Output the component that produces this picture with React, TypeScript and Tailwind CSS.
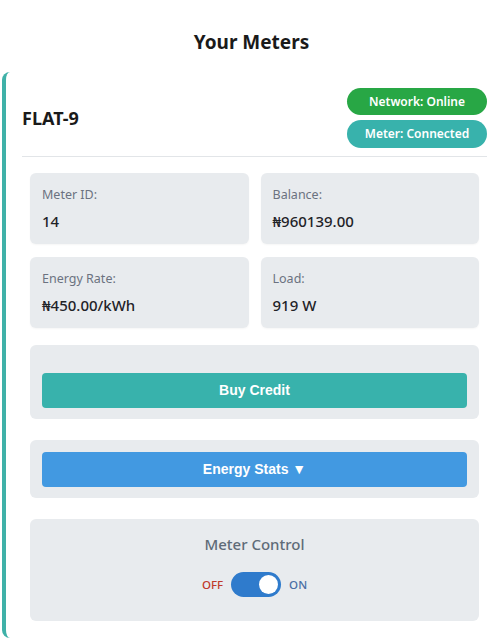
import { useState } from "react";

const stats = [
  { label: "Meter ID:", value: "14" },
  { label: "Balance:", value: "₦960139.00" },
  { label: "Energy Rate:", value: "₦450.00/kWh" },
  { label: "Load:", value: "919 W" },
];

function StatBox({ label, value }: { label: string; value: string }) {
  return (
    <div className="h-[71px] rounded-md bg-[#e8ebee] px-3 pt-[13px] shadow-[0_1px_2px_rgba(0,0,0,0.04)]">
      <p className="text-[12.5px] leading-[18px] text-[#6b7280]">{label}</p>
      <p className="mt-[7px] text-[15px] leading-[20px] font-medium text-[#1f2328]">
        {value}
      </p>
    </div>
  );
}

function MeterToggle() {
  const [on, setOn] = useState(true);
  return (
    <div className="mt-[17px] flex items-center justify-center gap-[8px]">
      <span className="text-[11.5px] font-medium text-[#c0392b]">OFF</span>
      <button
        onClick={() => setOn(!on)}
        className={
          "flex h-[25px] w-[50px] items-center rounded-full px-[3px] " +
          (on ? "justify-end bg-[#2f7bcc]" : "justify-start bg-[#cbd5e0]")
        }
      >
        <span className="h-[19px] w-[19px] rounded-full bg-white" />
      </button>
      <span className="text-[11.5px] font-medium text-[#4a6fa5]">ON</span>
    </div>
  );
}

export default function App() {
  return (
    <div className="w-full overflow-hidden bg-white font-['Noto_Sans','Open_Sans',sans-serif]">
      <div className="w-[503px] pb-[8px]">
        <h2 className="pt-[28px] pb-[16px] text-center text-[19px] leading-[28px] font-bold text-[#1a1a1a]">
          Your Meters
        </h2>

        <div className="ml-[2px] rounded-l-lg border-l-4 border-[#3fb1a8] bg-white pl-4 pr-4 pt-4 pb-[17px]">
          <div className="flex items-center justify-between border-b border-[#e2e5e8] pb-[8px]">
            <h3 className="text-[18px] font-bold text-[#1a1a1a]">FLAT-9</h3>
            <div className="flex flex-col items-end gap-[5px]">
              <span className="flex h-[27px] w-[140px] items-center justify-center rounded-full bg-[#28a745] text-[12px] font-semibold text-white">
                Network: Online
              </span>
              <span className="flex h-[28px] w-[140px] items-center justify-center rounded-full bg-[#38b2ac] text-[12px] font-semibold text-white">
                Meter: Connected
              </span>
            </div>
          </div>

          <div className="mx-2 mt-[16px] grid grid-cols-2 gap-x-3 gap-y-[13px]">
            {stats.map((s) => (
              <StatBox key={s.label} label={s.label} value={s.value} />
            ))}
          </div>

          <div className="mx-2 mt-[17px] rounded-md bg-[#e8ebee] px-3 pt-[28px] pb-[11px]">
            <button className="h-[35px] w-full rounded bg-[#38b2ac] font-['Liberation_Sans',sans-serif] text-[14px] font-bold text-white">
              Buy Credit
            </button>
          </div>

          <div className="mx-2 mt-[21px] rounded-md bg-[#e8ebee] p-3 pb-[11px]">
            <button className="h-[35px] w-full rounded bg-[#4299e1] font-['Liberation_Sans',sans-serif] text-[14px] font-bold text-white">
              Energy Stats ▼
            </button>
          </div>

          <div className="mx-2 mt-[21px] rounded-md bg-[#e8ebee] pt-[14px] pb-[24px] text-center">
            <h4 className="text-[15px] leading-[22px] font-medium text-[#5f6b78]">
              Meter Control
            </h4>
            <MeterToggle />
          </div>
        </div>
      </div>
    </div>
  );
}
